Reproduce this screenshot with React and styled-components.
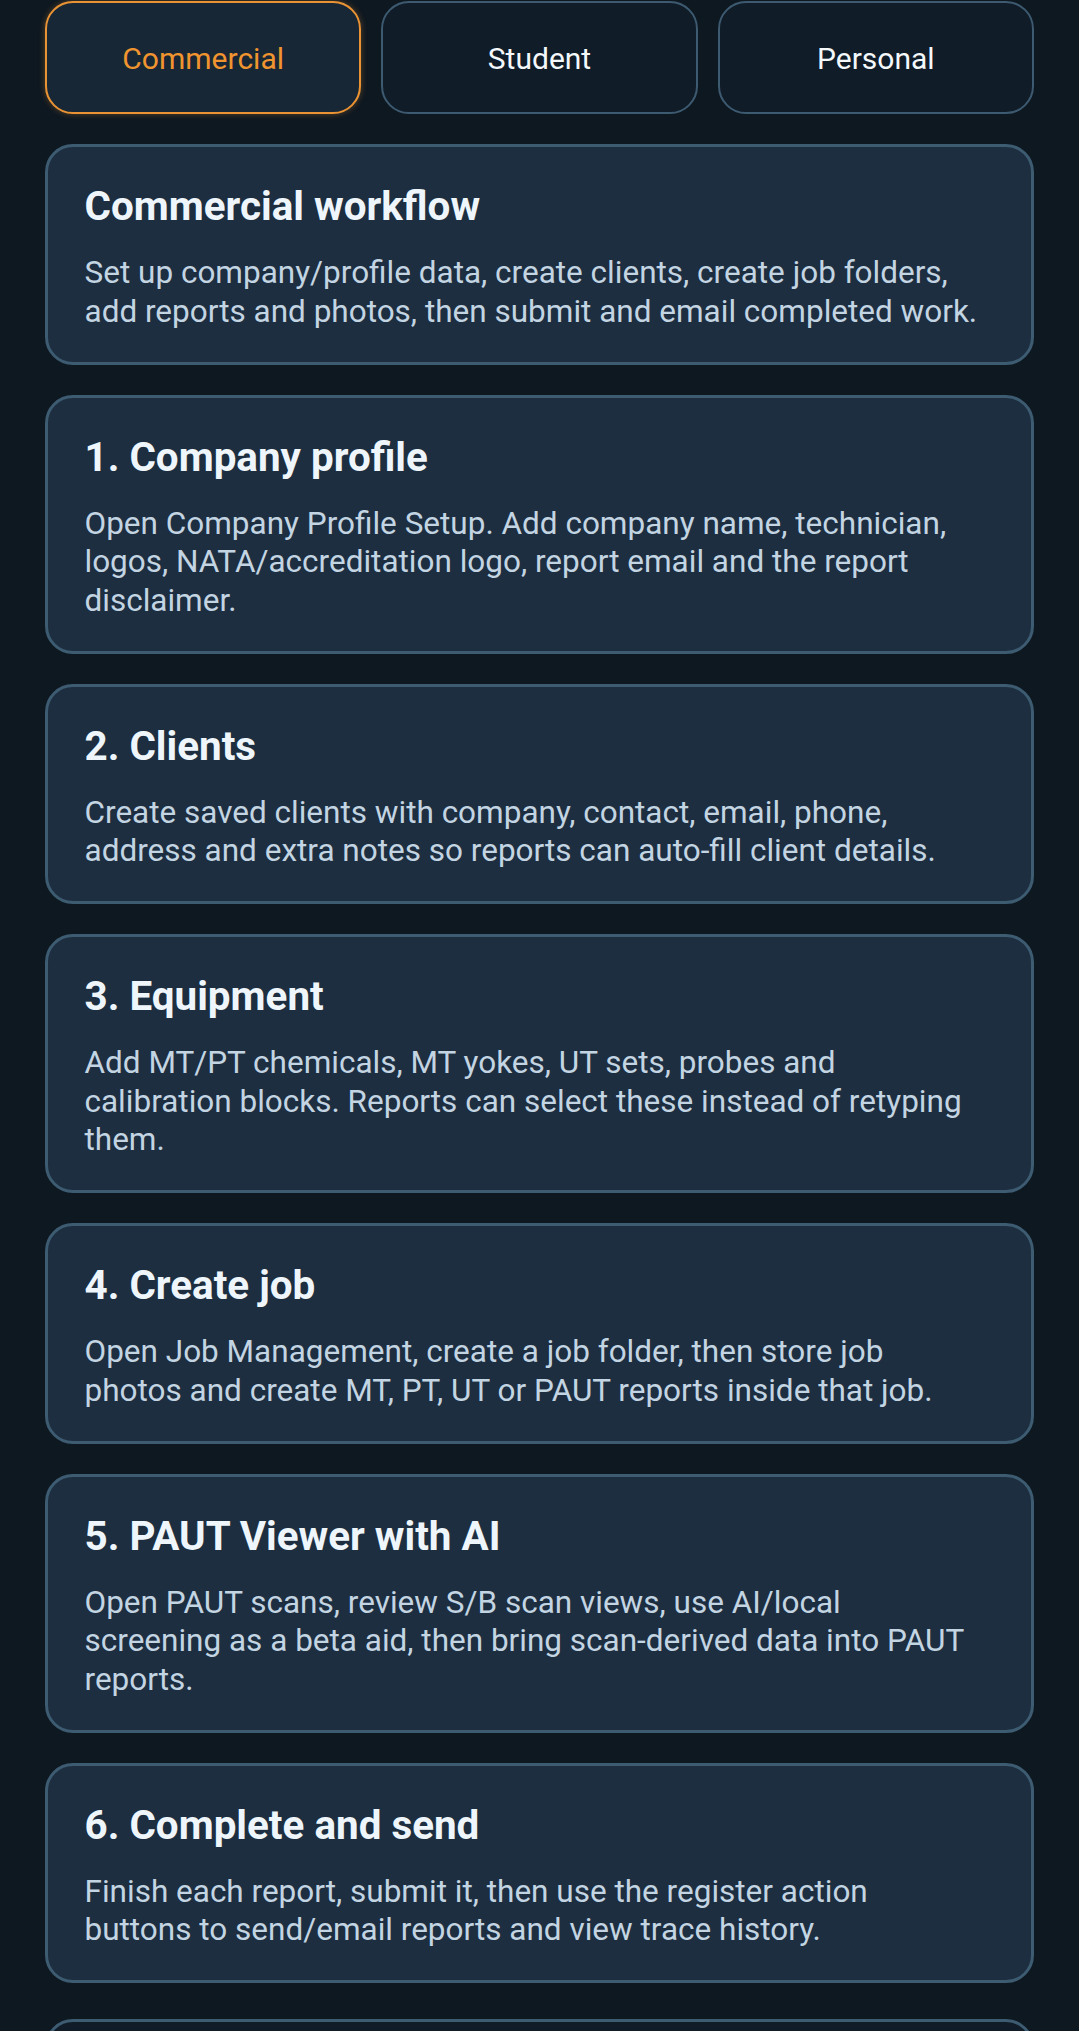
import React, { useState } from 'react';
import styled, { createGlobalStyle } from 'styled-components';

const GlobalStyle = createGlobalStyle`
  html, body {
    margin: 0;
    padding: 0;
    background: #0e1821;
  }
  body {
    font-family: Roboto, "Noto Sans", "Liberation Sans", sans-serif;
    -webkit-font-smoothing: antialiased;
  }
`;

const Page = styled.div`
  min-height: 100vh;
  box-sizing: border-box;
  padding: 1px 45px 40px;
  background: #0e1821;
  display: flex;
  flex-direction: column;
  gap: 30px;
`;

const Tabs = styled.div`
  display: grid;
  grid-template-columns: repeat(3, 1fr);
  gap: 20px;
`;

const Tab = styled.button`
  height: 113px;
  border-radius: 28px;
  border: 2.5px solid ${p => (p.$active ? '#ea9334' : '#3d5a70')};
  background: ${p => (p.$active ? '#172736' : '#101c28')};
  color: ${p => (p.$active ? '#f0942f' : '#f4f8fb')};
  box-shadow: ${p => (p.$active ? '0 0 6px rgba(234, 147, 52, 0.35)' : 'none')};
  font-family: inherit;
  font-size: 30px;
  font-weight: 400;
  cursor: pointer;
  padding: 2px 0 0;
`;

const Steps = styled.div`
  display: flex;
  flex-direction: column;
  gap: 30px;
`;

const Card = styled.section`
  border-radius: 28px;
  border: 3px solid #3d5b71;
  background: ${p => (p.$muted ? '#101d29' : '#1c2e3f')};
  padding: 36px 53px 30.5px 36.5px;
  margin-top: ${p => (p.$muted ? '6px' : '0')};
`;

const Title = styled.h2`
  margin: 0 0 23px;
  font-size: 40.4px;
  line-height: 48px;
  font-weight: 700;
  color: #eef5fb;
`;

const Text = styled.p`
  margin: 0;
  font-size: 31.5px;
  line-height: 38.5px;
  font-weight: 400;
  color: #c3d4e2;
`;

const modes = ['Commercial', 'Student', 'Personal'];

const steps = [
  {
    title: 'Commercial workflow',
    text: 'Set up company/profile data, create clients, create job folders, add reports and photos, then submit and email completed work.',
  },
  {
    title: '1. Company profile',
    text: 'Open Company Profile Setup. Add company name, technician, logos, NATA/accreditation logo, report email and the report disclaimer.',
  },
  {
    title: '2. Clients',
    text: 'Create saved clients with company, contact, email, phone, address and extra notes so reports can auto-fill client details.',
  },
  {
    title: '3. Equipment',
    text: 'Add MT/PT chemicals, MT yokes, UT sets, probes and calibration blocks. Reports can select these instead of retyping them.',
  },
  {
    title: '4. Create job',
    text: 'Open Job Management, create a job folder, then store job photos and create MT, PT, UT or PAUT reports inside that job.',
  },
  {
    title: '5. PAUT Viewer with AI',
    text: 'Open PAUT scans, review S/B scan views, use AI/local screening as a beta aid, then bring scan-derived data into PAUT reports.',
  },
  {
    title: '6. Complete and send',
    text: 'Finish each report, submit it, then use the register action buttons to send/email reports and view trace history.',
  },
];

export default function App() {
  const [mode, setMode] = useState('Commercial');

  return (
    <>
      <GlobalStyle />
      <Page>
        <Tabs>
          {modes.map(m => (
            <Tab key={m} $active={m === mode} onClick={() => setMode(m)}>
              {m}
            </Tab>
          ))}
        </Tabs>
        <Steps>
          {steps.map(s => (
            <Card key={s.title}>
              <Title>{s.title}</Title>
              <Text>{s.text}</Text>
            </Card>
          ))}
          <Card $muted>
            <Title>Need help?</Title>
            <Text>Open the help menu for guides on each report type.</Text>
          </Card>
        </Steps>
      </Page>
    </>
  );
}
